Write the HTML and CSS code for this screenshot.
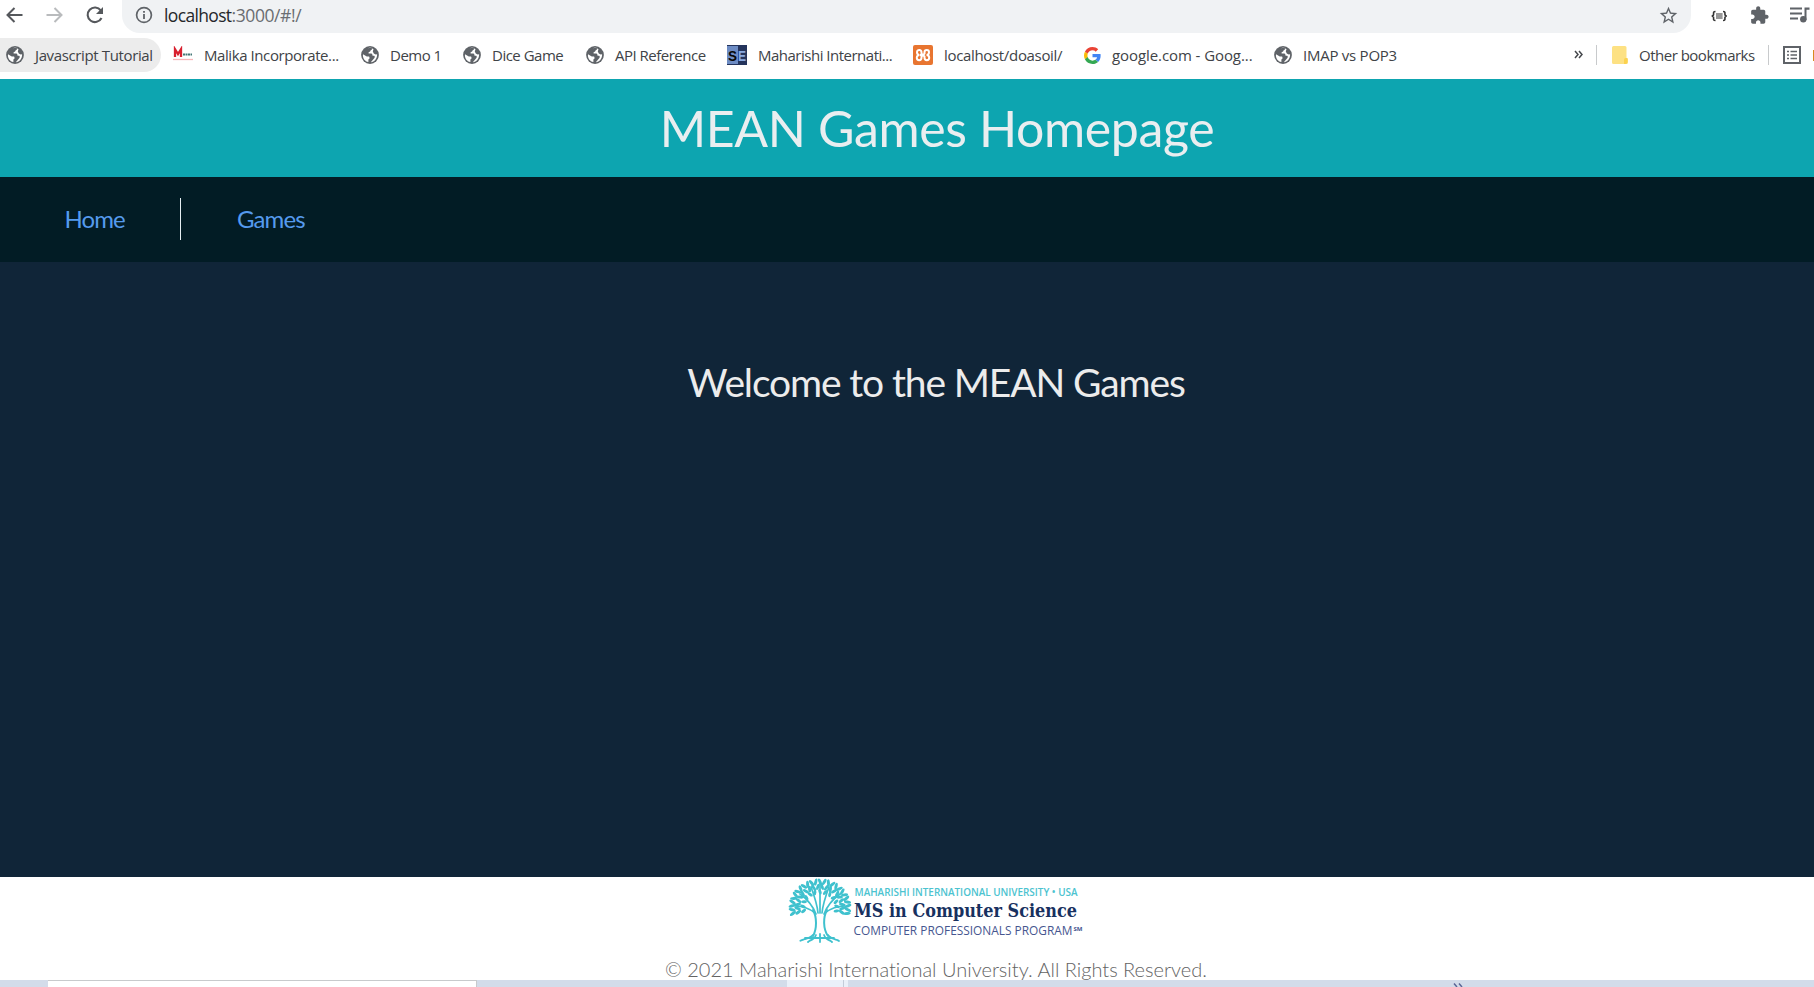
FILE: index.html
```html
<!DOCTYPE html>
<html lang="en">
<head>
<meta charset="utf-8">
<title>MEAN Games</title>
<link rel="stylesheet" href="styles.css">
</head>
<body>
<svg class="defs" width="0" height="0">
  <symbol id="globe" viewBox="0 0 18 18">
    <circle cx="9" cy="9" r="8.9" fill="#5f6368"/>
    <path d="M7.2 2.2C8.5 1.7 10 1.8 11.2 2.3C11.3 3.4 10.6 4 9.7 4.2L9.1 5.6L7.6 6.2V7.4H10.6L11.5 8.8V9.8H13.2C14 10.2 13.8 11.4 13.4 12.1L11.5 14.2L9.800 16.200C13.500 16 16.400 12.500 16.100 8.300L14.7 8.500L12.800 7.500L11.800 5.500L12.500 3.200C11 1.900 9.500 1.700 7.200 2.200zM2 8.2L5.800 10.400H8.100L8.700 12.300L7.400 13.600V16C4 15.400 1.400 12.200 2 8.200z" fill="#fff" class="land"/>
  </symbol>
</svg>
<div class="toolbar">
  <svg width="122" height="32" viewBox="0 0 122 32" fill="none" stroke-width="2">
    <path d="M22.5 15H8M14.5 8L7.5 15L14.5 22" stroke="#55585c"/>
    <path d="M46.5 15H61M54.5 8L61.5 15L54.5 22" stroke="#b9bbbd"/>
    <path d="M100.8 10.4A7.3 7.3 0 1 0 101.5 18" stroke="#55585c" stroke-width="2.1"/>
    <path d="M103 7V14H96z" fill="#55585c"/>
  </svg>
  <div class="address">
    <svg width="18" height="18" viewBox="0 0 18 18"><circle cx="9" cy="9" r="7.4" fill="none" stroke="#5f6368" stroke-width="1.7"/><path d="M8.1 8H9.9V13H8.1zM8.1 5H9.9V6.8H8.1z" fill="#5f6368"/></svg>
    <span class="url"><span class="host">localhost</span>:3000/#!/</span>
    <svg class="star" width="21" height="21" viewBox="0 0 24 24"><path d="M22 9.24l-7.19-.62L12 2 9.19 8.63 2 9.24l5.46 4.73L5.82 21 12 17.27 18.18 21l-1.63-7.03L22 9.24zM12 15.4l-3.76 2.27 1-4.28-3.32-2.88 4.38-.38L12 6.1l1.71 4.04 4.38.38-3.32 2.88 1 4.28L12 15.4z" fill="#5f6368"/></svg>
  </div>
  <svg width="123" height="32" viewBox="1691 0 123 32">
    <g fill="none" stroke="#333" stroke-width="1.6"><path d="M1715.500 11.500C1713 11.500 1713.600 13 1713.600 14C1713.600 15.300 1713 16 1711.600 16C1713 16 1713.600 16.700 1713.600 18C1713.600 19 1713 20.500 1715.500 20.500M1723 11.500C1725.500 11.500 1724.900 13 1724.900 14C1724.900 15.300 1725.500 16 1726.900 16C1725.500 16 1724.900 16.700 1724.900 18C1724.900 19 1725.500 20.500 1723 20.500"/><path d="M1716 14H1722.600M1716 16H1722.600M1716 18H1722.600" stroke-width="1.1"/></g>
    <path transform="translate(1749.500 5.500) scale(.83)" d="M20.500 11H19V7c0-1.100-.9-2-2-2h-4V3.500C13 2.120 11.880 1 10.500 1S8 2.120 8 3.500V5H4c-1.100 0-1.990.9-1.990 2v3.800H3.500c1.490 0 2.700 1.210 2.700 2.700s-1.210 2.700-2.700 2.700H2V20c0 1.100.9 2 2 2h3.800v-1.500c0-1.490 1.210-2.700 2.700-2.700 1.490 0 2.700 1.210 2.700 2.700V22H17c1.100 0 2-.9 2-2v-4h1.500c1.380 0 2.500-1.120 2.500-2.500S21.880 11 20.500 11z" fill="#5f6368"/>
    <path d="M1790 7.500H1802V9.500H1790zM1790 12.500H1802V14.500H1790zM1790 17.500H1798V19.500H1790zM1804.500 7.500H1809.500V9.700H1806.500V20H1804.500z" fill="#5f6368"/><circle cx="1803.300" cy="19.300" r="3.200" fill="#5f6368"/>
  </svg>
</div>
<div class="bookmarks">
  <div class="bm active"><svg width="18" height="18"><use href="#globe"/></svg><span class="b1">Javascript Tutorial</span></div>
  <div class="bm"><svg width="20" height="18" viewBox="0 0 20 18"><path d="M2 11V3.200L5 8L8 3.200V11" fill="none" stroke="#d8202f" stroke-width="2.300"/><path d="M10 8.500H19" stroke="#477" stroke-width="2" stroke-dasharray="2 .5"/><path d="M0 13.500H20" stroke="#f6b5b9" stroke-width="1.300"/></svg><span class="b2">Malika Incorporate...</span></div>
  <div class="bm"><svg width="18" height="18"><use href="#globe"/></svg><span>Demo 1</span></div>
  <div class="bm"><svg width="18" height="18"><use href="#globe"/></svg><span>Dice Game</span></div>
  <div class="bm"><svg width="18" height="18"><use href="#globe"/></svg><span>API Reference</span></div>
  <div class="bm"><svg width="20" height="20" viewBox="0 0 20 20"><path d="M0 0H20V20H0z" fill="#24345c"/><path d="M0 1H11V19H0z" fill="#6d8cc4"/><text x="1" y="15.500" class="se" fill="#080808" textLength="9" lengthAdjust="spacingAndGlyphs">S</text><text x="11" y="15.500" class="se" fill="#8aaae0" textLength="8" lengthAdjust="spacingAndGlyphs">E</text></svg><span>Maharishi Internati...</span></div>
  <div class="bm"><svg width="20" height="20" viewBox="0 0 20 20"><rect width="20" height="20" rx="2" fill="#e87530"/><path d="M10 10H7M8.500 7.500C8.500 4.300 4 4.300 4 7.300C4 9 5 10 6.500 10C4.800 10 3.800 11.200 3.800 12.800C3.800 16 8.500 16 8.500 12.800V11.500L11.500 8.500V7.300C11.500 4.300 16 4.300 16 7.300C16 9 15 10 13.500 10C15.200 10 16.200 11.200 16.200 12.800C16.200 16 11.500 16 11.500 12.800V11.500L8.500 8.500z" fill="none" stroke="#fff" stroke-width="2"/></svg><span class="b7">localhost/doasoil/</span></div>
  <div class="bm"><svg width="17" height="17" viewBox="0 0 48 48"><path fill="#EA4335" d="M24 9.500c3.540 0 6.710 1.220 9.210 3.600l6.850-6.850C35.900 2.380 30.470 0 24 0 14.620 0 6.510 5.380 2.560 13.220l7.980 6.190C12.430 13.720 17.740 9.500 24 9.500z"/><path fill="#4285F4" d="M46.980 24.550c0-1.570-.15-3.090-.38-4.550H24v9.020h12.940c-.58 2.960-2.260 5.480-4.780 7.180l7.730 6c4.510-4.180 7.090-10.360 7.090-17.650z"/><path fill="#FBBC05" d="M10.530 28.590c-.48-1.450-.76-2.990-.76-4.590s.27-3.140.76-4.590l-7.980-6.190C.92 16.460 0 20.120 0 24c0 3.880.92 7.540 2.560 10.780l7.970-6.190z"/><path fill="#34A853" d="M24 48c6.480 0 11.930-2.130 15.890-5.810l-7.730-6c-2.150 1.450-4.920 2.300-8.160 2.300-6.260 0-11.570-4.220-13.470-9.910l-7.980 6.190C6.510 42.620 14.620 48 24 48z"/></svg><span class="b8">google.com - Goog...</span></div>
  <div class="bm"><svg width="18" height="18"><use href="#globe"/></svg><span class="b9">IMAP vs POP3</span></div>
  <svg width="10" height="10" viewBox="0 0 10 10" class="more"><path d="M1 1L4 4.500L1 8M5 1L8 4.500L5 8" fill="none" stroke="#45484c" stroke-width="1.500"/></svg>
  <div class="bm other"><svg width="16" height="18" viewBox="0 0 16 18"><path d="M1.500 0H13Q14.500 0 14.500 1.500V12L16 13V16.500Q16 18 14 18H1.500Q0 18 0 16.500V1.500Q0 0 1.500 0z" fill="#fde183"/><path d="M12 18V13.500Q12 12 13.500 12H15.500V16Q15.500 18 13.500 18z" fill="#fbd24f"/></svg><span>Other bookmarks</span></div>
  <div class="bm list"><svg width="31" height="18" viewBox="0 0 31 18"><rect x="1" y="1" width="16" height="16" fill="none" stroke="#5f6368" stroke-width="2"/><path d="M4 5.500H6M4 9H6M4 12.500H6M7.500 5.500H14M7.500 9H14M7.500 12.500H14" stroke="#5f6368" stroke-width="1.600"/><path d="M30 4H31V15H30z" fill="#d88a20"/></svg></div>
</div>
<header class="banner"><h1>MEAN Games Homepage</h1></header>
<nav class="menu"><a class="home">Home</a><a class="games">Games</a></nav>
<main class="main"><h2>Welcome to the MEAN Games</h2></main>
<footer class="footer">
  <svg class="logo" width="296" height="66" viewBox="788 879 296 66">
    <g fill="none" stroke="#3fc1ce" stroke-linecap="round">
      <path d="M813 937C817 930 817 918 813 911M828 937C823 930 823 918 827 911" stroke-width="2"/>
      <path d="M815 914C810 910 803 907 795 907M816 915C812 905 807 900 800 895M818 914C817 904 814 896 811 888M820 914V884M822 914C823 904 826 896 829 888M824 915C828 905 833 900 840 895M825 914C830 910 837 907 845 907" stroke-width="1.700"/>
      <path d="M813 936C809 940 803 940 800 942M816 936C814 941 810 941 808 943M820 935V943M824 936C826 941 830 941 832 943M828 936C831 940 836 940 839 942M805 939H835" stroke-width="1.800" stroke-dasharray="4 1"/>
    </g>
    <g id="leaves" fill="#3fc1ce"></g>
    <text x="854.500" y="896.500" class="l1" textLength="223" lengthAdjust="spacingAndGlyphs">MAHARISHI INTERNATIONAL UNIVERSITY • USA</text>
    <text x="854" y="917.500" class="l2" textLength="223" lengthAdjust="spacingAndGlyphs">MS in Computer Science</text>
    <text x="853.500" y="935.500" class="l3" textLength="219" lengthAdjust="spacingAndGlyphs">COMPUTER PROFESSIONALS PROGRAM</text>
    <text x="1073.500" y="931.500" class="l4" textLength="9" lengthAdjust="spacingAndGlyphs">SM</text>
  </svg>
  <p class="copy">© 2021 Maharishi International University. All Rights Reserved.</p>
</footer>
<div class="taskbar"><span class="pane"></span><span class="tab"></span><svg class="chev" width="12" height="4" viewBox="0 0 12 4"><path d="M1 .5L4 4M6 .5L9 4" stroke="#5a6596" stroke-width="1.500"/></svg></div>
<script src="leaves.js"></script>
</body>
</html>
```
FILE: leaves.js
```js
// Fans the tree's leaves out over the crown, ring by ring.
const leaves = document.getElementById('leaves');
const rings = [[28, 25, 6], [22.5, 20, 5.4], [17, 13, 4.6]];
for (const [radius, count, size] of rings) {
  for (let i = 0; i < count; i++) {
    const deg = -195 + (210 * i) / (count - 1);
    const a = (deg * Math.PI) / 180;
    const x = 820 + Math.cos(a) * radius;
    const y = 908 + Math.sin(a) * radius * 0.9;
    const leaf = document.createElementNS('http://www.w3.org/2000/svg', 'ellipse');
    leaf.setAttribute('rx', size / 2 + 0.6);
    leaf.setAttribute('ry', 1.5);
    leaf.setAttribute('transform', `translate(${x} ${y}) rotate(${deg + (i % 2 ? 22 : -22)})`);
    leaves.appendChild(leaf);
  }
}
```
FILE: styles.css
```css
* { box-sizing: border-box; }
body { margin: 0; width: 1814px; height: 987px; overflow: hidden; background: #fff; font-family: Lato, sans-serif; display: flex; flex-direction: column; }
.defs { position: absolute; }
svg { flex: none; display: block; }
.toolbar { height: 33px; display: flex; font-family: "Open Sans", sans-serif; }
.address { width: 1569px; height: 33px; background: #f0f2f4; border-radius: 0 0 18px 18px; display: flex; align-items: center; padding: 0 12px 3px 13px; }
.url { margin-left: 11px; font-size: 17.5px; letter-spacing: -.4px; color: #6a6d71; white-space: nowrap; }
.host { color: #25272a; letter-spacing: -.65px; }
.star { margin-left: auto; }
.bookmarks { height: 46px; padding-top: 5px; display: grid; align-items: start; grid-template-columns: 173px 188px 102px 123px 141px 186px 171px 190px 300px 22px 172px 46px; font-family: "Open Sans", sans-serif; font-size: 15px; color: #404347; }
.bm { height: 34px; display: flex; align-items: center; gap: 11px; white-space: nowrap; }
.active { width: 161px; background: #ececec; border-radius: 0 17px 17px 0; padding-left: 6px; }
.bm span { letter-spacing: -.5px; line-height: 24px; }
.bm .b1 { letter-spacing: -.37px; }
.bm .b2 { letter-spacing: -.42px; }
.bm .b7 { letter-spacing: -.33px; }
.bm .b8 { letter-spacing: -.08px; }
.bm .b9 { letter-spacing: -.25px; }
.more { margin-top: 12px; }
.other { border-left: 1px solid #c8cacc; height: 20px; margin-top: 7px; padding-left: 15px; }
.list { border-left: 1px solid #c8cacc; height: 20px; margin-top: 7px; padding-left: 14px; }
.se { font: bold 15px "Liberation Sans", sans-serif; }
.banner { height: 98px; background: #0da5b0; text-align: center; padding-left: 60px; }
.banner h1 { margin: 0; font-size: 50px; font-weight: 400; line-height: 99px; letter-spacing: -.37px; color: #e9eef0; }
.menu { height: 85px; background: #021c25; display: flex; align-items: flex-start; padding-top: 21px; font-size: 24px; color: #559aed; letter-spacing: -.9px; }
.menu a { height: 42px; line-height: 41px; }
.home { width: 181px; border-right: 1px solid #e5eef2; padding-left: 64.5px; }
.games { padding-left: 56px; }
.main { height: 615px; background: #102538; text-align: center; padding: 92px 0 0 58px; }
.main h2 { margin: 0; font-size: 39px; font-weight: 400; line-height: 56px; letter-spacing: -1.13px; color: #ececec; }
.footer { height: 103px; display: flex; flex-direction: column; padding-top: 1px; }
.logo { margin-left: 788px; }
.copy { margin: 13px 0 0 665px; font-size: 20px; font-weight: 300; line-height: 24px; color: #636363; white-space: nowrap; font-variant-ligatures: none; }
.l1 { font: 600 10.500px "Open Sans", sans-serif; fill: #4cc3d0; }
.l2 { font: bold 18.500px "DejaVu Serif", serif; fill: #18315f; }
.l3 { font: 12.500px "Open Sans", sans-serif; fill: #46568f; }
.l4 { font: bold 6px "Open Sans", sans-serif; fill: #46568f; }
.taskbar { height: 7px; background: #d3dcea; display: flex; }
.pane { width: 429px; margin-left: 48px; background: #fff; border-top: 1px solid #c8cacc; border-right: 1px solid #c8cacc; }
.tab { width: 61px; margin-left: 310px; background: linear-gradient(90deg, #eaf0f9 56px, #c3ccd9 56px 57px, #eaf0f9 57px); }
.chev { margin: 3px 0 0 605px; }
```
